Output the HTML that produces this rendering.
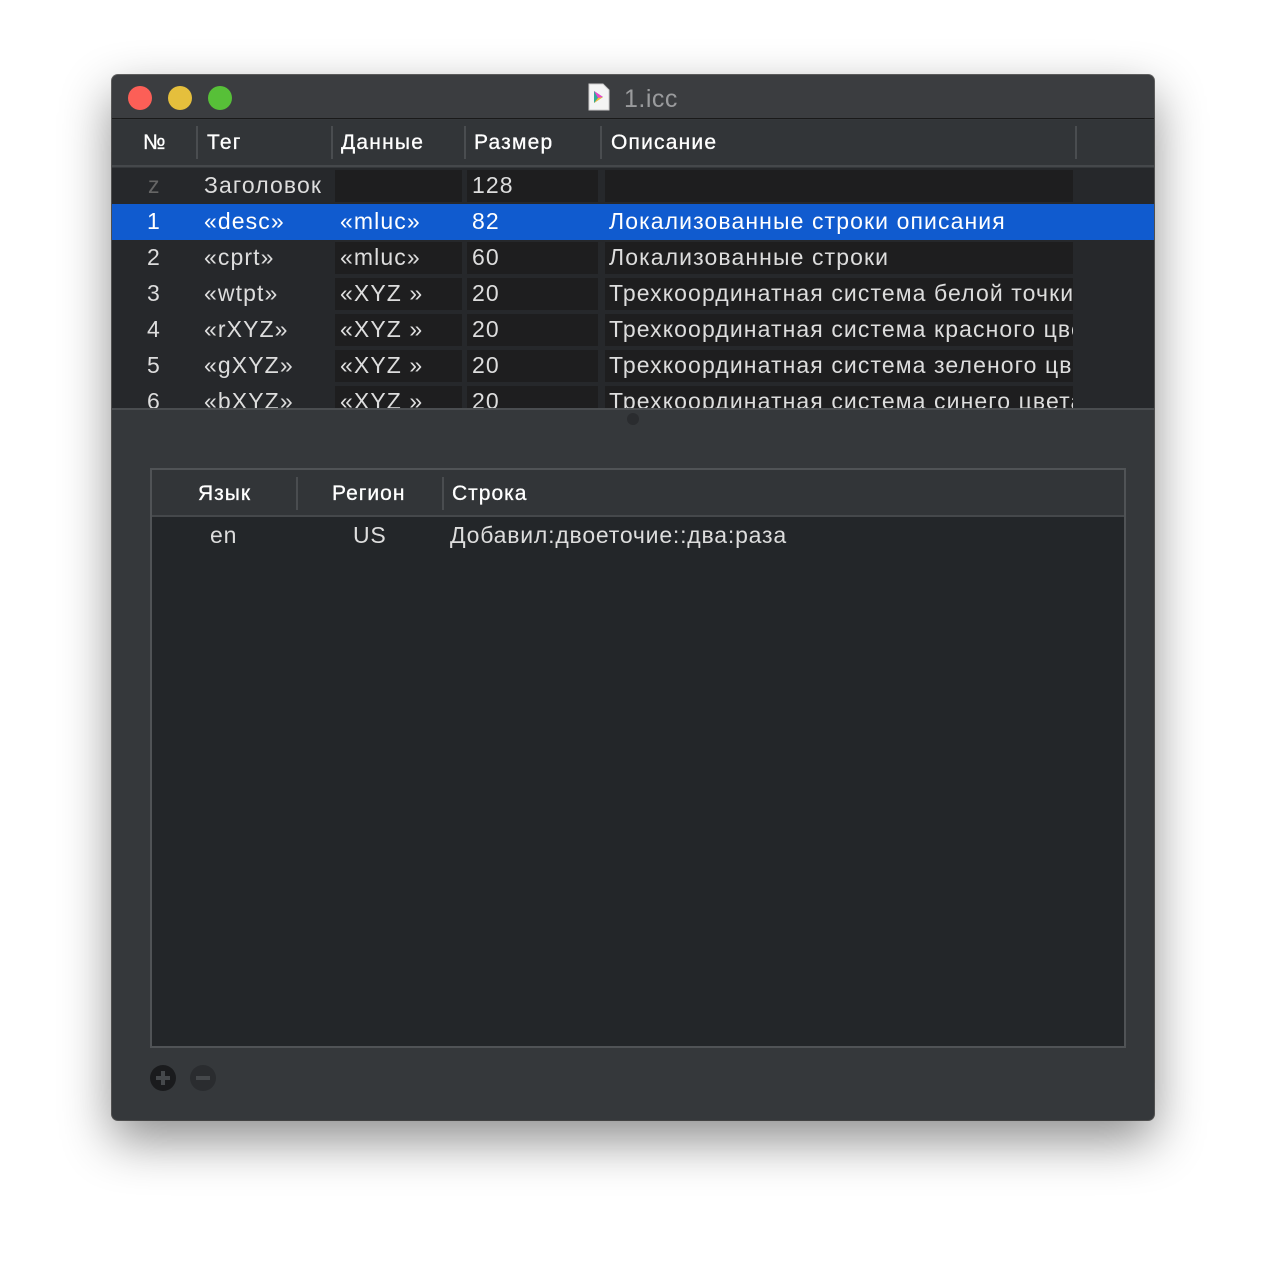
<!DOCTYPE html>
<html><head><meta charset="utf-8"><style>
*{margin:0;padding:0;box-sizing:border-box}
body{width:1266px;height:1268px;background:#fff;font-family:"Liberation Sans","DejaVu Sans",sans-serif;position:relative;overflow:hidden}
.win{position:absolute;left:112px;top:75px;width:1042px;height:1045px;background:#35383b;border-radius:6px;overflow:hidden;box-shadow:0 20px 50px rgba(0,0,0,.45),0 0 0 1px #666}
.title{position:absolute;left:0;top:0;width:100%;height:44px;background:#3b3d40;border-bottom:1px solid #1a1a1a}
.dot{position:absolute;top:11px;width:24px;height:24px;border-radius:50%}
.ttl{position:absolute;left:512px;top:10px;color:#9a9b9d;font-size:25px;letter-spacing:0.5px}
.hdr{position:absolute;left:0;top:45px;width:100%;height:47px;background:#323538;border-bottom:2px solid #45484b;color:#fff;font-size:21px;letter-spacing:1.2px;-webkit-text-stroke:0.3px #fff}
.hdr span{position:absolute;top:11px}
.sep{position:absolute;top:6px;width:2px;height:33px;background:#4a4d50}
.rows{position:absolute;left:0;top:93px;width:100%;height:240px;background:#26282b;overflow:hidden;color:#ddd;font-size:23px;letter-spacing:1.1px}
.row{position:absolute;left:0;width:100%;height:36px}
.c{position:absolute;top:2px;height:32px;background:#1e1e1f}
.t{position:absolute;top:4px;white-space:nowrap}
.sel{background:#105bcf;color:#fff}
.sel .c{background:transparent}
.div{position:absolute;left:0;top:333px;width:100%;height:2px;background:#4a4d50}
.knob{position:absolute;left:515px;top:338px;width:12px;height:12px;border-radius:50%;background:#2a2c2f}
.tbl{position:absolute;left:38px;top:393px;width:976px;height:580px;border:2px solid #505356;background:#232629}
.th{position:absolute;left:0;top:0;width:100%;height:47px;background:#323538;border-bottom:2px solid #45484b;color:#fff;font-size:21px;letter-spacing:1px;-webkit-text-stroke:0.3px #fff}
.th span{position:absolute;top:12px}
.b{position:absolute;top:52px;color:#ddd;font-size:23px;letter-spacing:0.8px}
.btn{position:absolute;top:990px;width:26px;height:26px;border-radius:50%}
</style></head><body>
<div class="win">
 <div class="title">
  <div class="dot" style="left:16px;background:#fc5f57"></div>
  <div class="dot" style="left:56px;background:#e5bf3c"></div>
  <div class="dot" style="left:96px;background:#57c038"></div>
  <svg style="position:absolute;left:476px;top:8px" width="22" height="28" viewBox="0 0 22 28"><path d="M1 1h14l6 6v20H1z" fill="#f4f4f4" stroke="#ccc"/><path d="M6 8l9 6-9 6z" fill="#3a9"/><path d="M6 8l9 6-5 1z" fill="#e4c"/><path d="M6 20l4-5 5-1z" fill="#fb3"/></svg>
  <div class="ttl">1.icc</div>
 </div>
 <div class="hdr">
  <span style="left:31px">№</span><div class="sep" style="left:84px"></div>
  <span style="left:95px">Тег</span><div class="sep" style="left:219px"></div>
  <span style="left:229px">Данные</span><div class="sep" style="left:352px"></div>
  <span style="left:362px">Размер</span><div class="sep" style="left:488px"></div>
  <span style="left:499px">Описание</span><div class="sep" style="left:963px"></div>
 </div>
 <div class="rows">
  <div class="row" style="top:0"><div class="c" style="left:223px;width:127px"></div><div class="c" style="left:355px;width:131px"></div><div class="c" style="left:493px;width:468px"></div>
   <span class="t" style="left:36px;color:#666">z</span><span class="t" style="left:92px">Заголовок</span><span class="t" style="left:360px">128</span></div>
  <div class="row sel" style="top:36px"><span class="t" style="left:35px">1</span><span class="t" style="left:92px">«desc»</span><span class="t" style="left:228px">«mluc»</span><span class="t" style="left:360px">82</span><span class="t" style="left:497px">Локализованные строки описания</span></div>
  <div class="row" style="top:72px"><div class="c" style="left:223px;width:127px"></div><div class="c" style="left:355px;width:131px"></div><div class="c" style="left:493px;width:468px"></div>
   <span class="t" style="left:35px">2</span><span class="t" style="left:92px">«cprt»</span><span class="t" style="left:228px">«mluc»</span><span class="t" style="left:360px">60</span><span class="t" style="left:497px">Локализованные строки</span></div>
  <div class="row" style="top:108px"><div class="c" style="left:223px;width:127px"></div><div class="c" style="left:355px;width:131px"></div><div class="c" style="left:493px;width:468px;overflow:hidden"><span class="t" style="left:4px;top:2px">Трехкоординатная система белой точки</span></div>
   <span class="t" style="left:35px">3</span><span class="t" style="left:92px">«wtpt»</span><span class="t" style="left:228px">«XYZ »</span><span class="t" style="left:360px">20</span></div>
  <div class="row" style="top:144px"><div class="c" style="left:223px;width:127px"></div><div class="c" style="left:355px;width:131px"></div><div class="c" style="left:493px;width:468px;overflow:hidden"><span class="t" style="left:4px;top:2px">Трехкоординатная система красного цвета</span></div>
   <span class="t" style="left:35px">4</span><span class="t" style="left:92px">«rXYZ»</span><span class="t" style="left:228px">«XYZ »</span><span class="t" style="left:360px">20</span></div>
  <div class="row" style="top:180px"><div class="c" style="left:223px;width:127px"></div><div class="c" style="left:355px;width:131px"></div><div class="c" style="left:493px;width:468px;overflow:hidden"><span class="t" style="left:4px;top:2px">Трехкоординатная система зеленого цвета</span></div>
   <span class="t" style="left:35px">5</span><span class="t" style="left:92px">«gXYZ»</span><span class="t" style="left:228px">«XYZ »</span><span class="t" style="left:360px">20</span></div>
  <div class="row" style="top:216px"><div class="c" style="left:223px;width:127px"></div><div class="c" style="left:355px;width:131px"></div><div class="c" style="left:493px;width:468px;overflow:hidden"><span class="t" style="left:4px;top:2px">Трехкоординатная система синего цвета</span></div>
   <span class="t" style="left:35px">6</span><span class="t" style="left:92px">«bXYZ»</span><span class="t" style="left:228px">«XYZ »</span><span class="t" style="left:360px">20</span></div>
 </div>
 <div class="div"></div>
 <div class="knob"></div>
 <div class="tbl">
  <div class="th"><span style="left:46px">Язык</span><div class="sep" style="left:144px;top:7px"></div><span style="left:180px">Регион</span><div class="sep" style="left:290px;top:7px"></div><span style="left:300px">Строка</span></div>
  <div class="b" style="left:58px">en</div>
  <div class="b" style="left:201px">US</div>
  <div class="b" style="left:298px">Добавил:двоеточие::два:раза</div>
 </div>
 <div class="btn" style="left:38px;background:#1a1b1d"><div style="position:absolute;left:6px;top:11px;width:14px;height:4px;background:#45484b"></div><div style="position:absolute;left:11px;top:6px;width:4px;height:14px;background:#45484b"></div></div>
 <div class="btn" style="left:78px;background:#2a2c2f"><div style="position:absolute;left:6px;top:11px;width:14px;height:4px;background:#45484b"></div></div>
</div>
</body></html>
